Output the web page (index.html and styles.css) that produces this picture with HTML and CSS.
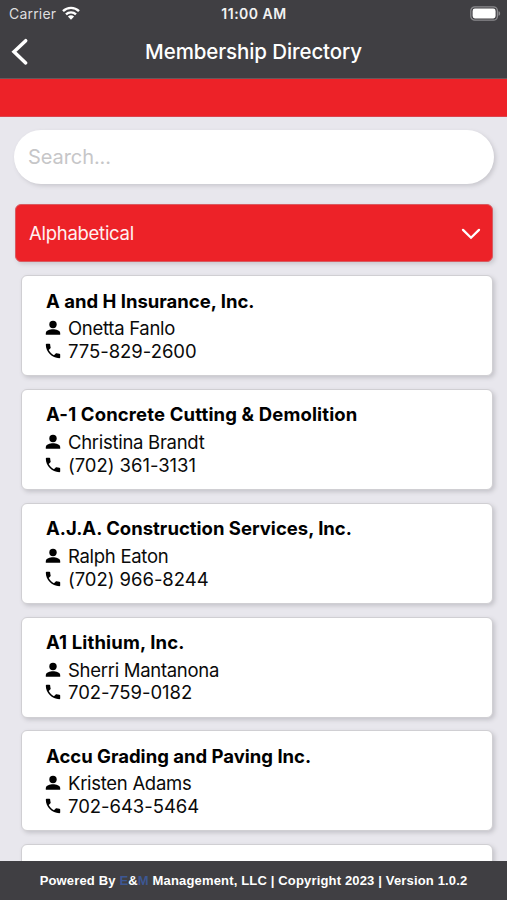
FILE: index.html
```html
<!DOCTYPE html>
<html lang="en">
<head>
<meta charset="utf-8">
<title>Membership Directory</title>
<link rel="stylesheet" href="styles.css">
</head>
<body>
<svg class="symbols" aria-hidden="true">
  <symbol id="person" viewBox="0 0 16 16"><circle cx="8" cy="4.5" r="3.7"/><path d="M.8 14.7v-1.6C.8 10.5 5 9.3 8 9.3s7.2 1.2 7.2 3.8v1.6z"/></symbol>
  <symbol id="phone" viewBox="2 2 20 20"><path d="M6.62 10.79c1.44 2.83 3.76 5.14 6.59 6.59l2.2-2.2c.27-.27.67-.36 1.02-.24 1.12.37 2.33.57 3.57.57.55 0 1 .45 1 1V20c0 .55-.45 1-1 1C10.61 21 3 13.39 3 4c0-.55.45-1 1-1h3.5c.55 0 1 .45 1 1 0 1.25.2 2.45.57 3.57.11.35.03.74-.25 1.02z"/></symbol>
</svg>
<div class="app">
  <header class="header">
    <div class="status">
      <span class="carrier">Carrier</span>
      <svg class="wifi" viewBox="0 0 18 14"><g fill="none" stroke="#fff" stroke-width="2.4"><path d="M1 5.2a11.4 11.4 0 0 1 16 0"/><path d="M4 8.4a7.2 7.2 0 0 1 10 0"/></g><path d="M5.9 10.6a4.5 4.5 0 0 1 6.2 0L9 13.8z" fill="#fff"/></svg>
      <span class="time">11:00 AM</span>
      <svg class="battery" viewBox="0 0 31 15"><rect x=".8" y=".8" width="26.6" height="13.4" rx="4" fill="none" stroke="#8b8b8e" stroke-width="1.3"/><rect x="2.6" y="2.6" width="23" height="9.8" rx="2.3" fill="#fff"/><path d="M28.5 5.2c2.2.5 2.2 4.1 0 4.6z" fill="#8b8b8e"/></svg>
    </div>
    <div class="nav">
      <svg class="back" viewBox="0 0 18 28"><path d="M14.7 2.7 3 13.7l11.7 11.2" fill="none" stroke="#fff" stroke-width="3.5" stroke-linecap="round"/></svg>
      <h1 class="title">Membership Directory</h1>
    </div>
  </header>
  <div class="banner"></div>
  <main class="content">
    <div class="search">Search...</div>
    <div class="select"><span>Alphabetical</span><svg class="chevron" viewBox="0 0 20 12"><path d="m2 1.9 8 7.8 8-7.8" fill="none" stroke="#fff" stroke-width="2.3" stroke-linecap="round"/></svg></div>
    <div class="list">
      <article class="card"><h2 class="name">A and H Insurance, Inc.</h2><p class="row"><svg><use href="#person"/></svg><span>Onetta Fanlo</span></p><p class="row phone"><svg><use href="#phone"/></svg><span>775-829-2600</span></p></article>
      <article class="card"><h2 class="name wide">A-1 Concrete Cutting &amp; Demolition</h2><p class="row"><svg><use href="#person"/></svg><span>Christina Brandt</span></p><p class="row phone"><svg><use href="#phone"/></svg><span>(702) 361-3131</span></p></article>
      <article class="card"><h2 class="name">A.J.A. Construction Services, Inc.</h2><p class="row"><svg><use href="#person"/></svg><span>Ralph Eaton</span></p><p class="row phone"><svg><use href="#phone"/></svg><span>(702) 966-8244</span></p></article>
      <article class="card"><h2 class="name wide">A1 Lithium, Inc.</h2><p class="row"><svg><use href="#person"/></svg><span>Sherri Mantanona</span></p><p class="row phone"><svg><use href="#phone"/></svg><span>702-759-0182</span></p></article>
      <article class="card"><h2 class="name">Accu Grading and Paving Inc.</h2><p class="row"><svg><use href="#person"/></svg><span>Kristen Adams</span></p><p class="row phone"><svg><use href="#phone"/></svg><span>702-643-5464</span></p></article>
      <article class="card"></article>
    </div>
  </main>
  <footer class="footer"><span>Powered By <b class="brand">E</b>&amp;<b class="brand">M</b> Management, LLC | Copyright 2023 | Version 1.0.2</span></footer>
</div>
</body>
</html>
```
FILE: styles.css
```css
* { box-sizing: border-box; }
body { margin: 0; font-family: Inter, "Liberation Sans", sans-serif; color: #0a0a0a; }
h1, h2, p { margin: 0; }
.symbols { display: none; }
.app { height: 900px; display: flex; flex-direction: column; overflow: hidden; background: #e8e7ed; }
.header { flex: 0 0 79px; background: #403f43; color: #fff; border-bottom: 1px solid #69595c; }
.status { display: grid; grid-template-columns: 52px 1fr auto 1fr 31px; height: 27px; align-items: center; padding: 0 6px 0 9px; font-size: 14px; line-height: 27px; }
.carrier { color: #dededf; letter-spacing: .2px; white-space: nowrap; }
.wifi { width: 18px; height: 14px; margin-left: 1px; margin-top: -2px; }
.time { font-weight: 600; font-size: 14px; letter-spacing: .5px; color: #f2f2f2; margin-left: -23px; }
.battery { grid-column: 5; width: 31px; height: 15px; margin-top: -1px; }
.nav { display: grid; grid-template-columns: 40px 1fr 40px; height: 50px; align-items: center; }
.back { width: 18px; height: 28px; margin-left: 11px; }
.title { text-align: center; font-size: 20.5px; line-height: 50px; font-weight: 550; letter-spacing: -.1px; }
.banner { flex: 0 0 38px; background: #ed2228; border-bottom: 1px solid #dc444d; }
.content { flex: 1; min-height: 0; overflow: hidden; padding: 12.5px 14px 0; }
.search { width: 480px; height: 54px; border-radius: 27px; padding-left: 14px; background: #fff; color: #c6c6c8; font-size: 20px; letter-spacing: -.08px; line-height: 54px; box-shadow: 2px 2px 4px #c9c8ce; }
.select { display: flex; align-items: center; justify-content: space-between; width: 478px; height: 58px; margin: 20px 0 0 1px; padding: 0 11.5px 0 13px; border: 1px solid #d85b61; border-radius: 6px; background: #ed2228; color: #fff0f0; font-size: 18.5px; letter-spacing: -.27px; box-shadow: 2px 2px 4px #c9c8ce; }
.chevron { width: 20px; height: 12px; margin-top: 3px; }
.list { display: grid; gap: 12.75px; margin: 13.8px 0 0 7px; width: 472px; }
.card { height: 101px; padding: 12.3px 24px 0; background: #fff; border: 1px solid #d0cfd3; border-radius: 6px; box-shadow: 2px 2px 4px #c5c4ca; }
.name { font-size: 18.5px; line-height: 24px; font-weight: 700; white-space: nowrap; margin-bottom: 4.4px; color: #000; }
.wide { letter-spacing: .15px; }
.row { display: flex; align-items: center; height: 22.7px; font-size: 18.5px; letter-spacing: -.29px; white-space: nowrap; }
.phone { letter-spacing: -.04px; }
.row svg { width: 16px; height: 16px; margin-right: 7px; margin-left: -1px; }
.footer { flex: 0 0 39px; background: #403f43; color: #fff; text-align: center; font: bold 13px/39px "Liberation Sans", sans-serif; letter-spacing: .16px; white-space: nowrap; }
.brand { color: #3d5794; }
```
